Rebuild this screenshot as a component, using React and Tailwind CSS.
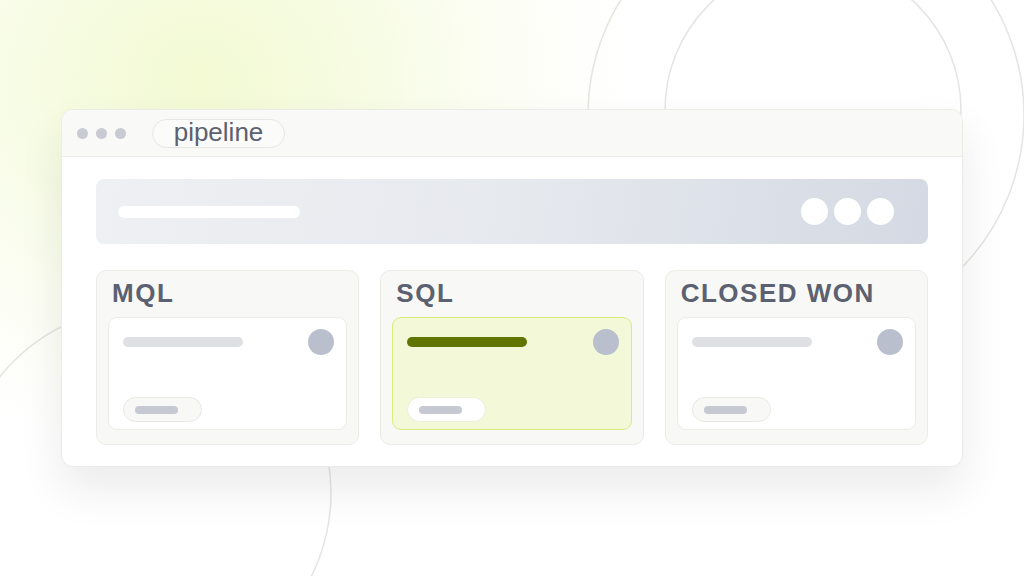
import React from 'react';

const FONT = { fontFamily: '"Liberation Sans", Arial, Helvetica, sans-serif' };

const COLUMNS = [
  { title: 'MQL', active: false },
  { title: 'SQL', active: true },
  { title: 'CLOSED WON', active: false },
];

function Backdrop() {
  // decorative rings behind the window
  return (
    <svg className="absolute inset-0 w-full h-full" viewBox="0 0 1024 576" fill="none">
      <circle cx="806" cy="115" r="218" stroke="#e4e4e1" strokeWidth="1.5" />
      <circle cx="813" cy="110" r="148" stroke="#e4e4e1" strokeWidth="1.5" />
      <circle cx="145" cy="493" r="186" stroke="#e4e4e1" strokeWidth="1.5" />
    </svg>
  );
}

function LeadCard({ active }) {
  return (
    <div
      className={`h-[113px] rounded-[9px] flex flex-col justify-between pt-[11px] pb-[7px] pl-[14px] pr-[12px] ${
        active ? 'bg-[#f3f8d9] border-[1.5px] border-[#d6ed7e]' : 'bg-white border border-[#ebebe7]'
      }`}
    >
      <div className="flex items-center justify-between">
        <div className={`w-[120px] h-[10px] rounded-full ${active ? 'bg-[#5f7500]' : 'bg-[#dfe0e4]'}`} />
        <div className="w-[26px] h-[26px] rounded-full bg-[#b9bfcc]" />
      </div>
      <div
        className={`w-[79px] h-[25px] rounded-full border flex items-center pl-[11px] ${
          active ? 'bg-white border-[#eaf0d8]' : 'bg-[#f8f8f6] border-[#e8e8e4]'
        }`}
      >
        <div className="w-[43px] h-[8px] rounded-full bg-[#c6c9d2]" />
      </div>
    </div>
  );
}

export default function App() {
  return (
    <div
      className="relative w-[1024px] h-[576px] overflow-hidden flex items-center justify-center bg-[radial-gradient(ellipse_430px_380px_at_200px_80px,#f3fad3_0%,#f7fce4_40%,#fcfef4_70%,#ffffff_100%),radial-gradient(circle_at_1000px_560px,#f1f2f5_0px,#ffffff_300px)] bg-white"
      style={FONT}
    >
      <Backdrop />

      <div className="relative w-[902px] h-[358px] rounded-[12px] border border-[#ebebe7] bg-white shadow-[0_22px_44px_rgba(30,30,40,0.09)] overflow-hidden flex flex-col">
        {/* title bar */}
        <div className="h-[47px] shrink-0 bg-[#f9f9f7] border-b border-[#ebebe7] flex items-center pl-[15px]">
          <div className="flex gap-[8px]">
            <span className="w-[11px] h-[11px] rounded-full bg-[#c9cbd3]" />
            <span className="w-[11px] h-[11px] rounded-full bg-[#c9cbd3]" />
            <span className="w-[11px] h-[11px] rounded-full bg-[#c9cbd3]" />
          </div>
          <div className="ml-[26px] h-[29px] w-[133px] rounded-full border border-[#e6e6e2] bg-[#fbfbf9] flex items-center justify-center text-[26px] leading-none text-[#5b6170] pb-[3px]">
            pipeline
          </div>
        </div>

        {/* body */}
        <div className="flex-1 pt-[22px] px-[34px]">
          <div className="h-[65px] rounded-[8px] bg-[linear-gradient(100deg,#eef0f3_0%,#e6e9ee_50%,#d4d9e3_100%)] flex items-center justify-between pl-[22px] pr-[34px]">
            <div className="w-[182px] h-[12px] rounded-full bg-white" />
            <div className="flex gap-[6px]">
              <span className="w-[27px] h-[27px] rounded-full bg-white" />
              <span className="w-[27px] h-[27px] rounded-full bg-white" />
              <span className="w-[27px] h-[27px] rounded-full bg-white" />
            </div>
          </div>

          <div className="mt-[26px] grid grid-cols-3 gap-[21px]">
            {COLUMNS.map((col) => (
              <div
                key={col.title}
                className="h-[175px] rounded-[10px] border border-[#ebebe7] bg-[#f8f8f6] pt-[9px] px-[11px]"
              >
                <div className="h-[26px] leading-[26px] text-[26px] font-bold tracking-[0.058em] text-[#5b6170] pl-[4px]">
                  {col.title}
                </div>
                <div className="mt-[11px]">
                  <LeadCard active={col.active} />
                </div>
              </div>
            ))}
          </div>
        </div>
      </div>
    </div>
  );
}
